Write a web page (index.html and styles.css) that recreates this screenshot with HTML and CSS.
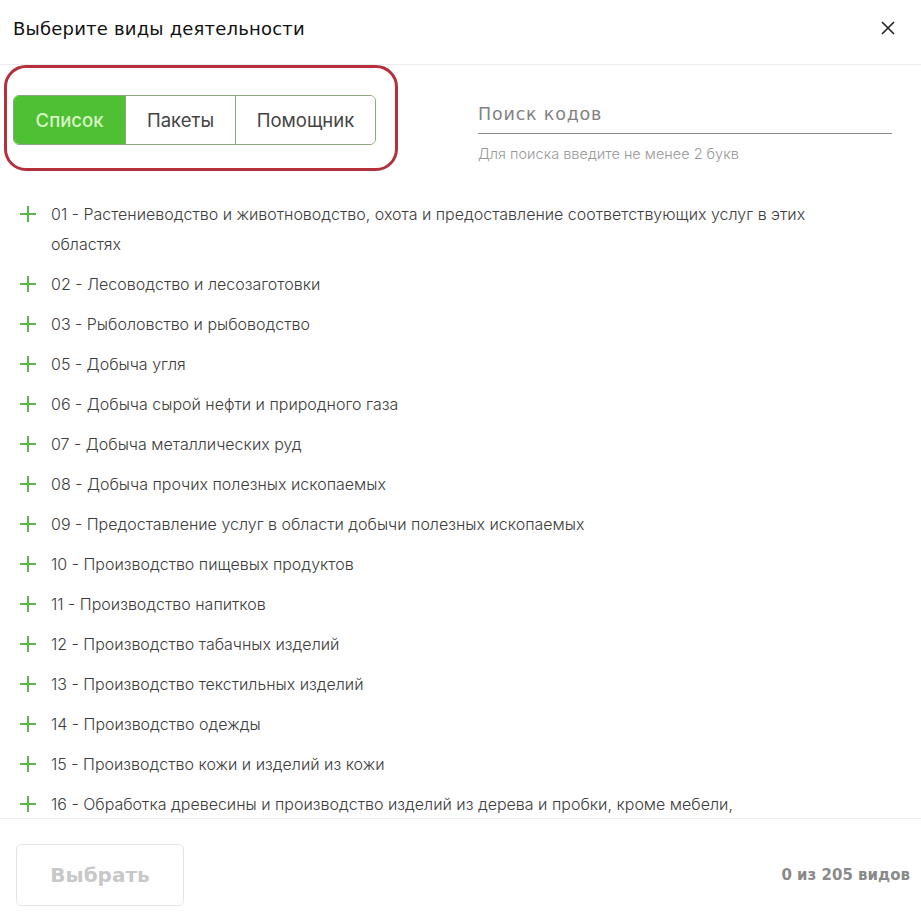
FILE: index.html
```html
<!DOCTYPE html>
<html lang="ru">
  <head>
    <meta charset="UTF-8" />
    <meta name="viewport" content="width=device-width, initial-scale=1.0" />
    <title>Выберите виды деятельности</title>
    <link rel="stylesheet" href="styles.css">
  </head>
  <body>
    <div class="modal">
      <!-- Modal header -->
      <header class="modal-header">
        <h2 class="modal-title">Выберите виды деятельности</h2>
        <button class="close" aria-label="Закрыть">
          <svg width="14" height="14" viewBox="0 0 14 14">
            <path d="M1 1 L13 13 M13 1 L1 13" stroke="#222" stroke-width="1.6" fill="none" />
          </svg>
        </button>
      </header>

      <!-- Tabs and search -->
      <div class="toolbar">
        <div class="tabs-frame">
          <div class="tabs">
            <button class="tab active">Список</button>
            <button class="tab">Пакеты</button>
            <button class="tab">Помощник</button>
          </div>
        </div>
        <div class="search">
          <input type="text" placeholder="Поиск кодов" />
          <p class="hint">Для поиска введите не менее 2 букв</p>
        </div>
      </div>

      <!-- Activity codes list -->
      <ul class="codes" id="codes"></ul>

      <!-- Footer -->
      <footer class="modal-footer">
        <button class="select" disabled>Выбрать</button>
        <span class="counter">0 из 205 видов</span>
      </footer>
    </div>

    <script>
      const codes = [
        '01 - Растениеводство и животноводство, охота и предоставление соответствующих услуг в этих областях',
        '02 - Лесоводство и лесозаготовки',
        '03 - Рыболовство и рыбоводство',
        '05 - Добыча угля',
        '06 - Добыча сырой нефти и природного газа',
        '07 - Добыча металлических руд',
        '08 - Добыча прочих полезных ископаемых',
        '09 - Предоставление услуг в области добычи полезных ископаемых',
        '10 - Производство пищевых продуктов',
        '11 - Производство напитков',
        '12 - Производство табачных изделий',
        '13 - Производство текстильных изделий',
        '14 - Производство одежды',
        '15 - Производство кожи и изделий из кожи',
        '16 - Обработка древесины и производство изделий из дерева и пробки, кроме мебели, производство изделий из соломки и материалов для плетения'
      ];

      const list = document.getElementById('codes');
      codes.forEach(code => {
        const li = document.createElement('li');
        li.className = 'code';
        li.innerHTML =
          '<svg class="plus" width="16" height="16" viewBox="0 0 16 16">' +
          '<path d="M8 0 V16 M0 8 H16" stroke="#5cb54a" stroke-width="2" fill="none"/></svg>' +
          '<span class="code-name"></span>';
        li.querySelector('.code-name').textContent = code;
        list.appendChild(li);
      });
    </script>
  </body>
</html>
```

FILE: styles.css
```css
/* Page */
body {
  margin: 0;
  background: #fff;
  font-family: Inter, "Noto Sans", sans-serif;
  color: #444;
}

.modal {
  height: 917px;
  display: flex;
  flex-direction: column;
  overflow: hidden;
}

/* Header */
.modal-header {
  height: 64px;
  display: flex;
  align-items: center;
  justify-content: space-between;
  padding: 0 26px 0 13px;
  border-bottom: 1px solid #ececec;
  flex-shrink: 0;
}

.modal-title {
  margin: 0 0 8px;
  font-family: "DejaVu Sans", sans-serif;
  font-size: 18px;
  font-weight: 500;
  letter-spacing: 0.2px;
  color: #111;
}

.close {
  background: none;
  border: none;
  padding: 0;
  margin-bottom: 8px;
  cursor: pointer;
  display: flex;
}

/* Toolbar with tabs and search */
.toolbar {
  display: flex;
  align-items: flex-start;
  padding-left: 4px;
  flex-shrink: 0;
}

.tabs-frame {
  width: 394px;
  height: 106px;
  border: 3px solid #b3303c;
  border-radius: 22px;
  padding: 27px 0 0 6px;
  box-sizing: border-box;
}

.tabs {
  display: flex;
  width: 363px;
  height: 50px;
  border: 1px solid #88a882;
  border-radius: 6px;
  overflow: hidden;
  box-sizing: border-box;
}

.tab {
  background: #fff;
  border: none;
  border-left: 1px solid #88a882;
  font-family: Inter, "Noto Sans", sans-serif;
  font-size: 18.5px;
  color: #444;
  cursor: pointer;
  padding: 0;
}

.tab:nth-child(1) {
  width: 111px;
  border-left: none;
}

.tab:nth-child(2) {
  width: 110px;
}

.tab:nth-child(3) {
  flex: 1;
}

.tab.active {
  background: #4fbf33;
  color: #d6f7c4;
  font-weight: 500;
}

.search {
  margin-left: 80px;
  padding-top: 32px;
  width: 414px;
}

.search input {
  display: block;
  width: 100%;
  border: none;
  border-bottom: 1px solid #8a8a8a;
  padding: 7px 0 9px;
  font-family: "DejaVu Sans", sans-serif;
  font-size: 17.5px;
  letter-spacing: 0.8px;
  outline: none;
  box-sizing: border-box;
}

.search input::placeholder {
  color: #828282;
}

.hint {
  margin: 11px 0 0;
  font-size: 14.5px;
  font-weight: 300;
  color: #999;
}

/* Codes list */
.codes {
  list-style: none;
  margin: 0;
  padding: 23px 96px 0 20px;
  flex: 1;
  overflow: hidden;
}

.code {
  display: flex;
  align-items: flex-start;
  padding: 5px 0;
  font-size: 16px;
  font-weight: 300;
  line-height: 30px;
  color: #3c3c3c;
}

.plus {
  flex-shrink: 0;
  margin: 7px 15px 0 0;
}

/* Footer */
.modal-footer {
  height: 99px;
  border-top: 1px solid #ececec;
  display: flex;
  align-items: center;
  justify-content: space-between;
  padding: 14px 11px 0 16px;
  box-sizing: border-box;
  flex-shrink: 0;
}

.select {
  width: 168px;
  height: 62px;
  background: #fff;
  border: 1px solid #e6e6e6;
  border-radius: 5px;
  font-family: "DejaVu Sans", sans-serif;
  font-size: 20px;
  font-weight: 600;
  color: #c8c8c8;
}

.counter {
  font-family: "DejaVu Sans", sans-serif;
  font-size: 15px;
  font-weight: 600;
  color: #8a8a8a;
}
```
